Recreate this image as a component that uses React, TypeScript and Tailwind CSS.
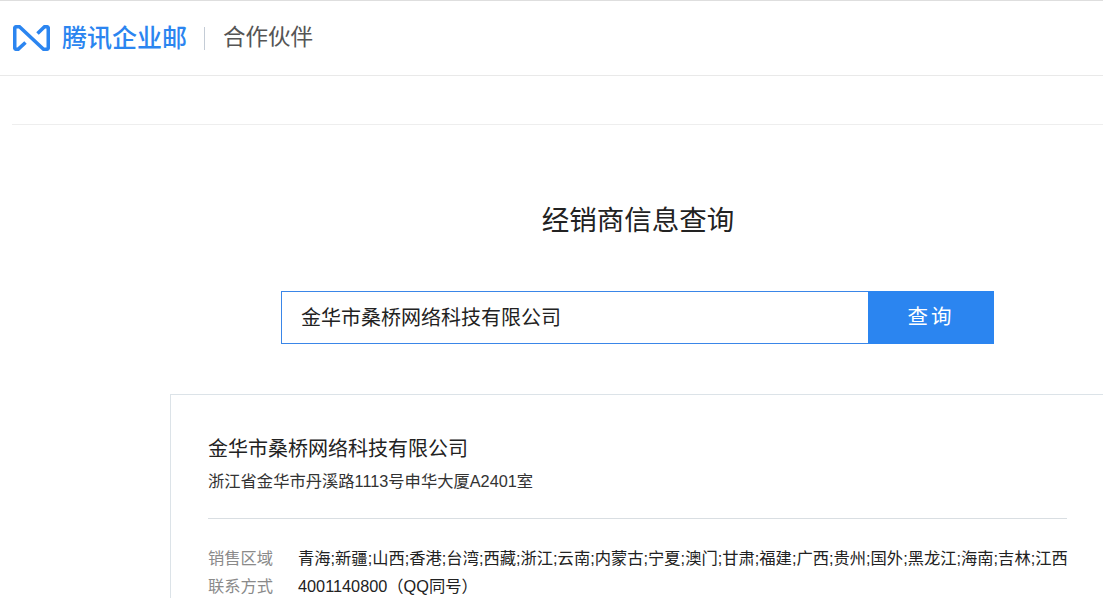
const cjk = { fontFamily: '"Liberation Sans", "Noto Sans CJK SC", sans-serif' }

function Logo() {
  return (
    <svg width="37" height="26" viewBox="0 0 37 26" fill="none" className="shrink-0">
      <path
        d="M12.5 17.5 L5 24.3 H3.700 Q1.700 24.300 1.700 22.300 V3.700 Q1.700 1.700 3.700 1.700 H6.500 L30.500 24.300 H33.300 Q35.300 24.300 35.300 22.300 V3.700 Q35.300 1.700 33.300 1.700 H31.500 L24.500 8.500"
        stroke="#2b85f0"
        strokeWidth="3.6"
        strokeLinejoin="round"
      />
    </svg>
  )
}

export default function App() {
  return (
    <div className="min-h-[603px] overflow-hidden bg-white" style={cjk}>
      {/* Header */}
      <header className="flex h-[76px] items-center border-t border-b border-t-[#dedede] border-b-[#e9e9e9] pl-[13px]">
        <Logo />
        <span className="ml-[12px] text-[25px] leading-none font-medium text-[#2b85f0]">腾讯企业邮</span>
        <span className="ml-[17px] mr-[18px] h-[23px] w-px bg-[#c4ccd6]" />
        <span className="text-[22.500px] leading-none text-[#555555]">合作伙伴</span>
      </header>

      <div className="ml-[12px] mt-[48px] border-t border-[#eeeeee]" />

      <h1 className="mt-[76px] ml-[173px] text-center text-[27.500px] leading-[40px] font-normal text-[#222222]">
        经销商信息查询
      </h1>

      {/* Search */}
      <div className="mt-[50px] ml-[281px] flex h-[53px] w-[713px]">
        <div className="flex flex-1 items-center border border-r-0 border-[#3a86e8] pl-[19px] text-[20px] text-[#222222]">
          金华市桑桥网络科技有限公司
        </div>
        <button className="w-[126px] bg-[#2b85f0] text-[20.500px] tracking-[3px] text-white">查询</button>
      </div>

      {/* Result card */}
      <div className="mt-[50px] ml-[170px] border-t border-l border-[#dce3e8] pl-[37px] pr-[36px] pt-[40px]">
        <div className="text-[20px] leading-[28px] text-[#222222]">金华市桑桥网络科技有限公司</div>
        <div className="mt-[7px] text-[16.300px] leading-[22px] text-[#333333]">
          浙江省金华市丹溪路1113号申华大厦A2401室
        </div>
        <div className="mt-[26px] border-t border-[#d9dee2]" />
        <div className="mt-[27px] flex text-[16.300px] leading-[24px]">
          <span className="w-[90px] shrink-0 text-[#8a8a8a]">销售区域</span>
          <span className="whitespace-nowrap text-[#222222]">
            青海;新疆;山西;香港;台湾;西藏;浙江;云南;内蒙古;宁夏;澳门;甘肃;福建;广西;贵州;国外;黑龙江;海南;吉林;江西
          </span>
        </div>
        <div className="mt-[4px] flex text-[16.300px] leading-[24px]">
          <span className="w-[90px] shrink-0 text-[#8a8a8a]">联系方式</span>
          <span className="text-[#222222]">4001140800（QQ同号）</span>
        </div>
      </div>
    </div>
  )
}
